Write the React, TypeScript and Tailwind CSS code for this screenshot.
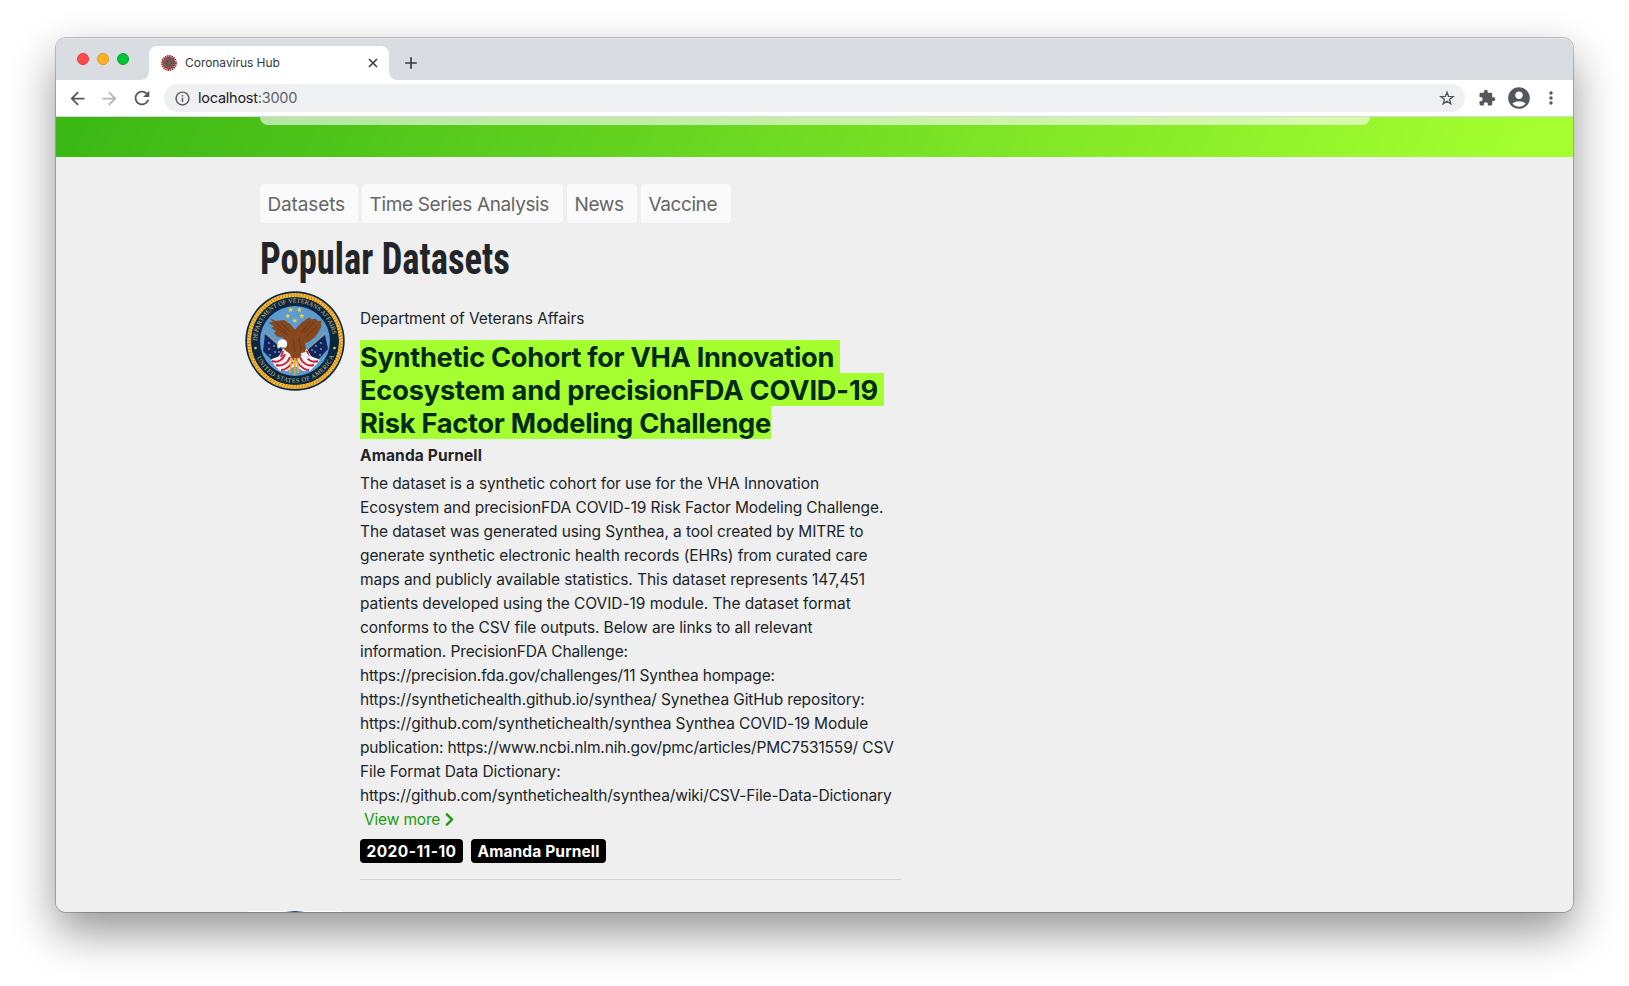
import { FaChevronRight } from "react-icons/fa";
import {
  MdAccountCircle,
  MdAdd,
  MdArrowBack,
  MdArrowForward,
  MdExtension,
  MdMoreVert,
  MdOutlineInfo,
  MdRefresh,
} from "react-icons/md";

const NAV = [
  { label: "Datasets", cls: "w-[98px] tracking-[-0.13px]" },
  { label: "Time Series Analysis", cls: "w-[201px] tracking-[-0.36px]" },
  { label: "News", cls: "w-[70px] tracking-[-0.4px]" },
  { label: "Vaccine", cls: "w-[90px] tracking-[-0.4px]" },
];

const TITLE = [
  { text: "Synthetic Cohort for VHA Innovation ", cls: "tracking-[-0.3px]" },
  { text: "Ecosystem and precisionFDA COVID-19 ", cls: "tracking-[-0.16px]" },
  { text: "Risk Factor Modeling Challenge", cls: "tracking-[-0.25px]" },
];

const BODY = [
  { text: "The dataset is a synthetic cohort for use for the VHA Innovation", cls: "tracking-[-0.1px]" },
  { text: "Ecosystem and precisionFDA COVID-19 Risk Factor Modeling Challenge.", cls: "tracking-[-0.1px]" },
  { text: "The dataset was generated using Synthea, a tool created by MITRE to", cls: "tracking-[-0.1px]" },
  { text: "generate synthetic electronic health records (EHRs) from curated care", cls: "tracking-[-0.09px]" },
  { text: "maps and publicly available statistics. This dataset represents 147,451", cls: "tracking-[-0.07px]" },
  { text: "patients developed using the COVID-19 module. The dataset format", cls: "tracking-[-0.055px]" },
  { text: "conforms to the CSV file outputs. Below are links to all relevant", cls: "tracking-[-0.11px]" },
  { text: "information. PrecisionFDA Challenge:", cls: "tracking-[-0.12px]" },
  { text: "https://precision.fda.gov/challenges/11 Synthea hompage:", cls: "tracking-[-0.145px]" },
  { text: "https://synthetichealth.github.io/synthea/ Synethea GitHub repository:", cls: "tracking-[-0.125px]" },
  { text: "https://github.com/synthetichealth/synthea Synthea COVID-19 Module", cls: "tracking-[-0.115px]" },
  { text: "publication: https://www.ncbi.nlm.nih.gov/pmc/articles/PMC7531559/ CSV", cls: "tracking-[-0.15px]" },
  { text: "File Format Data Dictionary:", cls: "tracking-[-0.08px]" },
  { text: "https://github.com/synthetichealth/synthea/wiki/CSV-File-Data-Dictionary", cls: "tracking-[-0.155px]" },
];

function star(cx: number, cy: number, r: number) {
  const pts: string[] = [];
  for (let i = 0; i < 10; i++) {
    const a = -Math.PI / 2 + (i * Math.PI) / 5;
    const d = i % 2 ? r * 0.42 : r;
    pts.push(`${(cx + d * Math.cos(a)).toFixed(2)},${(cy + d * Math.sin(a)).toFixed(2)}`);
  }
  return pts.join(" ");
}

function VirusIcon() {
  return (
    <svg className="size-4" viewBox="0 0 16 16">
      <circle cx="8" cy="8" r="6.2" fill="#75605f" />
      <circle cx="8" cy="8" r="7" fill="none" stroke="#a3262b" strokeWidth="1.9" strokeDasharray="1.5 0.7" />
      <circle cx="8" cy="8" r="4.8" fill="none" stroke="#9a3034" strokeWidth="1.3" strokeDasharray="1.1 1.2" />
      <circle cx="8" cy="8" r="2.4" fill="none" stroke="#473b3d" strokeWidth="1.4" strokeDasharray="1 1" />
    </svg>
  );
}

function Seal() {
  return (
    <svg className="size-[100px] shrink-0" viewBox="0 0 100 100">
      <defs>
        <path id="arc-top" d="M12.6 55 A37.8 37.8 0 1 1 87.4 55" />
        <path id="arc-bottom" d="M8.7 55 A41.6 41.6 0 0 0 91.3 55" />
        <clipPath id="disc">
          <circle cx="50" cy="50" r="34.5" />
        </clipPath>
      </defs>
      <circle cx="50" cy="50" r="49.7" fill="#0b2545" />
      <circle cx="50" cy="50" r="45.9" fill="none" stroke="#f8b932" strokeWidth="4.2" />
      <circle cx="50" cy="50" r="46.8" fill="none" stroke="#9a6a20" strokeWidth="1.9" strokeDasharray="0.6 2.4" />
      <circle cx="50" cy="50" r="45" fill="none" stroke="#9a6a20" strokeWidth="1.9" strokeDasharray="0.6 2.3" strokeDashoffset="1.1" />
      <circle cx="50" cy="50" r="43.8" fill="#0b2545" />
      <circle cx="50" cy="50" r="35" fill="#5b9bd0" />
      <g fill="#d5c66c" fontFamily="Liberation Serif, serif" fontSize="6.3">
        <text textLength="113" lengthAdjust="spacing">
          <textPath href="#arc-top" startOffset="5">DEPARTMENT OF VETERANS AFFAIRS</textPath>
        </text>
        <text textLength="98" lengthAdjust="spacing">
          <textPath href="#arc-bottom" startOffset="12">UNITED STATES OF AMERICA</textPath>
        </text>
      </g>
      <circle cx="10.5" cy="57" r="1.3" fill="#f3c23c" />
      <circle cx="89.5" cy="57" r="1.3" fill="#f3c23c" />
      {[[45.7, 18.7], [54.3, 18.7], [42.8, 25], [56.8, 25], [49.8, 29.6]].map(([x, y]) => (
        <polygon key={`${x}-${y}`} points={star(x, y, 2.8)} fill="#f7d33c" />
      ))}
      <g clipPath="url(#disc)">
        <path d="M20 43 L37 58 L45 72 L28 70 L18 60Z M80 44 L62 59 L55 72 L73 69 L83 58Z" fill="#12265c" />
        <path d="M26 69 C29 66 32 67 34 65 L38 58 L44 60 L50 68 L56 60 L62 58 L66 65 C69 67 72 67 75 69 L70 75 L65 80 L58 80 L50 75 L42 80 L35 80 L30 75Z" fill="#f4f1f2" />
        <path
          d="M27 70 C33 72 38 69 40 63 M31 74 C37 76 43 72 45 66 M36 79 C41 79 45 75 48 71 M38 60 L36 66 M73 70 C67 72 62 69 60 63 M69 74 C63 76 57 72 55 66 M64 79 C59 79 55 75 52 71 M62 60 L64 66"
          fill="none"
          stroke="#c4213b"
          strokeWidth="2"
        />
        <path d="M19 40 L42 61 M81 41 L60 61" stroke="#c89b3c" strokeWidth="0.9" />
        {[[24, 52], [24, 58], [29, 55], [30, 61], [25, 64], [34, 61], [76, 52], [76, 58], [71, 55], [70, 61], [75, 64], [67, 59]].map(([x, y]) => (
          <circle key={`${x}-${y}`} cx={x} cy={y} r="0.75" fill="#e9edf5" />
        ))}
      </g>
      <path
        d="M24.5 27 L31 30 L39 29 L45 33 L50 38.5 L56 32 L64 26.5 L67 28.5 L70 27.5 L73 30 L76.5 29.5 L76 36 L73.5 41 L70 46 L65 50 L60 52.5 L61 58 L59 63 L54 66.5 L52 70 L47 69 L45 63 L39 58 L35 51 L39 47 L32 45.5 L29 42 L31 40 L26 37 L29 35.5 L23.5 31.5 L28 31Z"
        fill="#84471e"
      />
      <path
        d="M31 33 L42 41 M33 38 L43 44 M36 32 L45 41 M69 31 L59 42 M72 35 L61 46 M65 30 L56 42 M48 48 L50 61 M54 47 L56 59"
        fill="none"
        stroke="#6a3415"
        strokeWidth="0.8"
      />
      <path d="M32.5 52.5 C33.5 48.5 37.5 47 41 49.5 C43 52 42.5 55.5 40 57 L36 55.5 L33 58Z" fill="#fff" />
      <path d="M33.5 52.5 L31.5 54.5 L33 57.5Z" fill="#f2b632" />
      <path d="M56 62 L61 61 L65 66 L61 69 L57 67Z" fill="#eef2f7" />
      <path d="M47 67 L45 82 M50 67 L49.5 84 M52.5 67 L53 82" stroke="#eda92c" strokeWidth="1.8" />
    </svg>
  );
}

function Chrome() {
  return (
    <>
      <div className="flex h-[42px] shrink-0 items-end bg-[#d9dce1] shadow-[inset_0_1px_0_#e6e8eb]">
        <div className="flex h-full w-[85px] items-center gap-2 pl-[21px]">
          <i className="size-3 rounded-full border border-[#e0383c] bg-[#ff4b4c]" />
          <i className="size-3 rounded-full border border-[#df9a1b] bg-[#ffb024]" />
          <i className="size-3 rounded-full border border-[#04a52a] bg-[#00c536]" />
        </div>
        <svg className="size-2" viewBox="0 0 8 8">
          <path d="M8 0 A8 8 0 0 1 0 8 H8Z" fill="#fff" />
        </svg>
        <div className="flex h-[34px] w-[240px] items-center rounded-t-lg bg-white pl-3">
          <VirusIcon />
          <span className="ml-2 flex-1 text-xs tracking-[-0.04px] text-[#35383c]">Coronavirus Hub</span>
          <svg className="mr-[9px] size-[14px]" viewBox="0 0 14 14" fill="none" stroke="#3c4043" strokeWidth="1.7">
            <path d="M3 3 L11 11 M11 3 L3 11" />
          </svg>
        </div>
        <svg className="size-2" viewBox="0 0 8 8">
          <path d="M0 0 A8 8 0 0 0 8 8 H0Z" fill="#fff" />
        </svg>
        <MdAdd className="mb-[7px] ml-[4px] size-5 text-[#35383c]" />
      </div>
      <div className="flex h-9 shrink-0 items-center bg-white text-[#54585d]">
        <MdArrowBack className="ml-[11px] size-[21px]" />
        <MdArrowForward className="ml-[11px] size-[21px] text-[#b3b6ba]" />
        <MdRefresh className="ml-[11px] size-[22px]" />
        <div className="ml-[11px] flex h-7 w-[1301px] items-center rounded-full bg-[#eff0f2] pl-[9.5px]">
          <MdOutlineInfo className="size-[17px]" />
          <span className="ml-[7.5px] flex-1 text-[14.5px] tracking-[-0.24px] text-[#5f6368]">
            <span className="text-[#202124]">localhost</span>:3000
          </span>
          <svg className="mr-[10px] size-4" viewBox="0 0 16 16" fill="none" stroke="#54585d" strokeWidth="1.4">
            <polygon points={star(8, 8.6, 6.4)} />
          </svg>
        </div>
        <MdExtension className="ml-[12.5px] size-[18px]" />
        <MdAccountCircle className="ml-[10px] size-[26px]" />
        <MdMoreVert className="ml-[9.5px] size-5" />
      </div>
      <div className="h-px shrink-0 bg-[#d6d8da]" />
    </>
  );
}

export default function App() {
  return (
    <div className="flex h-[986px] w-[1629px] overflow-hidden bg-white pt-[38px] pl-[56px] font-['Inter',sans-serif]">
      <div className="flex h-[874px] w-[1517px] flex-col rounded-[10px] shadow-[0_0_0_1px_rgba(0,0,0,0.22),0_20px_45px_rgba(0,0,0,0.42)]">
        <div className="flex min-h-0 flex-1 flex-col overflow-hidden rounded-[10px] bg-[#efefef]">
          <Chrome />
          <div className="h-10 shrink-0 bg-[linear-gradient(115deg,#3cb815_2%,#a5ff30_97%)] pl-[204px]">
            <div className="h-2 w-[1110px] rounded-b-lg bg-white/60" />
          </div>
          <main className="flex min-h-0 flex-1 flex-col overflow-hidden pl-[204px] text-[15.5px] leading-6 text-[#212529]">
            <nav className="mt-[27px] flex shrink-0 gap-1 text-[19px] leading-[37px] text-[#666]">
              {NAV.map((n) => (
                <a key={n.label} className={`h-[39px] rounded bg-[#fafafa] pt-[2px] pl-[7.5px] whitespace-nowrap ${n.cls}`}>
                  {n.label}
                </a>
              ))}
            </nav>
            <h1 className="mt-[9px] h-[59px] w-fit shrink-0 origin-left scale-x-[0.812] font-['Roboto_Condensed',sans-serif] text-[45px] leading-[54px] font-bold whitespace-nowrap">
              Popular Datasets
            </h1>
            <article className="-ml-[15px] flex h-[589px] shrink-0">
              <Seal />
              <div className="ml-[15px] w-[541px] border-b border-[#d2d3d4] pt-[16px]">
                <p className="tracking-[-0.1px]">Department of Veterans Affairs</p>
                <h2 className="mt-[9px] flex flex-col items-start text-[27.2px] leading-[31px] font-bold text-[#032a18]">
                  {TITLE.map((l) => (
                    <span key={l.text} className={`bg-[#a5ff30] pt-[2px] whitespace-pre ${l.cls}`}>
                      {l.text}
                    </span>
                  ))}
                </h2>
                <p className="mt-[5px] font-bold tracking-[0.13px]">Amanda Purnell</p>
                <div className="mt-[4px] flex flex-col whitespace-nowrap">
                  {BODY.map((l) => (
                    <span key={l.text} className={l.cls}>
                      {l.text}
                    </span>
                  ))}
                  <a className="flex items-center pl-1 tracking-[-0.17px] text-[#1a9c0c]">
                    View more
                    <FaChevronRight className="mb-px ml-[2px] size-[15px]" />
                  </a>
                </div>
                <div className="mt-[7px] flex gap-2 leading-[22px] font-bold text-white">
                  <span className="w-[103px] rounded bg-black pt-[2px] text-center tracking-[0.46px]">2020-11-10</span>
                  <span className="w-[135px] rounded bg-black pt-[2px] text-center tracking-[0.13px]">Amanda Purnell</span>
                </div>
              </div>
            </article>
            <div className="mt-[31px] -ml-[12px] flex h-px w-[94px] shrink-0 justify-center bg-white">
              <div className="h-px w-5 bg-linear-to-r from-white via-[#1f3a93] to-white" />
            </div>
          </main>
        </div>
      </div>
    </div>
  );
}
